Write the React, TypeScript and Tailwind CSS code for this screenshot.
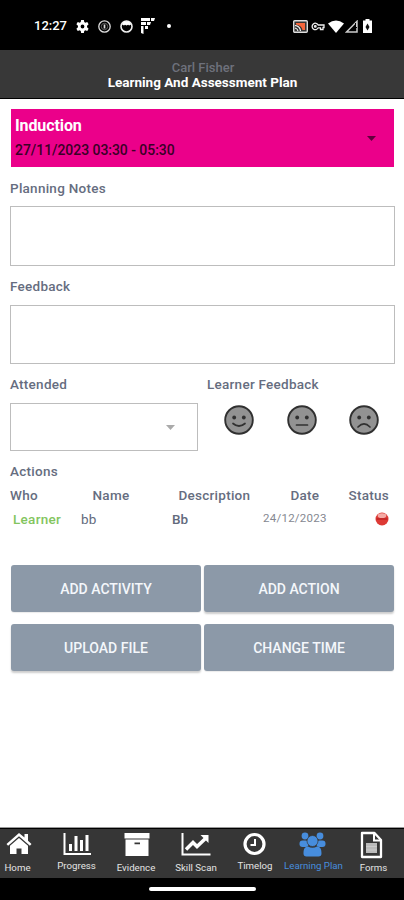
import React from "react";

function Label({ children }: { children: React.ReactNode }) {
  return <div className="h-[20px] text-[13.500px] leading-[20px] font-medium tracking-[0.260px] whitespace-nowrap text-[#666d80]">{children}</div>;
}

function StatusBar() {
  return (
    <div className="flex h-[50px] items-center bg-black pt-[2px] pl-[34px] text-white">
      <span className="w-[42px] text-[13px] leading-[18px] font-medium whitespace-nowrap">12:27</span>
      <svg className="w-[13px] h-[13px]" viewBox="0 0 24 24" fill="#fff">
        <path fillRule="evenodd" d="M9.5 0h5l.7 3.7 2 1.2 3.6-1.3 2.5 4.3-2.9 2.5v3.2l2.9 2.5-2.5 4.3-3.6-1.3-2 1.2-.7 3.7h-5l-.7-3.7-2-1.2-3.6 1.3-2.5-4.3 2.9-2.5v-3.2L.7 7.9l2.500-4.300 3.600 1.300 2-1.200zM12 8.500a3.500 3.500 0 1 0 0 7 3.500 3.500 0 0 0 0-7z" />
      </svg>
      <svg className="ml-[9px] w-[13px] h-[13px]" viewBox="0 0 13 13" fill="none" stroke="#ddd">
        <circle cx="6.500" cy="6.500" r="5.700" strokeWidth="1.300" />
        <circle cx="6.500" cy="6.500" r="3.200" strokeWidth=".8" stroke="#777" />
        <path d="M6.500 4.500v4" strokeWidth="1.700" />
      </svg>
      <svg className="ml-[9px] w-[13px] h-[13px]" viewBox="0 0 13 13">
        <circle cx="6.500" cy="6.500" r="5.500" fill="none" stroke="#eee" strokeWidth="1.600" />
        <path d="M2 4.500 4 5.600 5 4.700l1.500.9 1.600-.9 1 .9 2-1.100L9 1.200H4z" fill="#fff" />
      </svg>
      <svg className="ml-[8px] w-[15px] h-[16px]" viewBox="0 0 15 16" fill="#fff">
        <path d="M0 0h9v3H0zM10 0h4l-1 3h-3zM0 4h5v3H0zM6 4h4l-1 3H6zM0 8h2.500v8L0 15zM4 8h3v3H4z" />
      </svg>
      <span className="ml-[11px] h-[4px] w-[4px] rounded-full bg-white" />
      <div className="ml-auto flex items-center pr-[32px]">
        <svg className="w-[15px] h-[13px]" viewBox="0 0 15 13">
          <rect x=".7" y=".7" width="13.600" height="11.600" rx="1" fill="#333" stroke="#ddd" strokeWidth="1.400" />
          <path d="M3 3h9v7H9.500C9 7 6.500 5 3 4.500z" fill="#f4653b" />
          <path d="M2 5.500q5 .5 5.500 5.500M2 8q2.500.5 3 3" stroke="#fff" strokeWidth="1.100" fill="none" />
        </svg>
        <svg className="ml-[3px] w-[14px] h-[9px]" viewBox="0 0 14 9" fill="none" stroke="#eee" strokeWidth="1.300">
          <path d="M7.200 3H13v2.500h-1V7.500H9.500V5.800H7.200A3.200 3.200 0 1 1 7.200 3z" /><circle cx="4.300" cy="4.400" r=".8" />
        </svg>
        <svg className="ml-[3px] w-[16px] h-[13px]" viewBox="0 0 16 13"><path d="M0 3.500Q8-2.500 16 3.500L8 13z" fill="#fff" /></svg>
        <svg className="ml-[1px] w-[13px] h-[13px]" viewBox="0 0 13 13">
          <path d="M1.500 12H12V1.300z" fill="none" stroke="#ccc" strokeWidth="1.500" /><path d="M11 3v5" stroke="#000" strokeWidth="2" /><path d="M11.500 3v4" stroke="#ccc" />
        </svg>
        <svg className="ml-[5px] w-[9px] h-[14px]" viewBox="0 0 9 14">
          <path d="M2.500 0h4v1.500H9V14H0V1.500h2.500z" fill="#fff" /><path d="m4.500 4.500-2 3.500L4.500 11.500 6.500 8z" fill="#111" />
        </svg>
      </div>
    </div>
  );
}

function Face({ mouth }: { mouth: string }) {
  return (
    <svg className="h-[30px] w-[30px]" viewBox="0 0 30 30">
      <circle cx="15" cy="15" r="13.800" fill="#929292" stroke="#303030" strokeWidth="1.900" />
      <circle cx="10.200" cy="12.500" r="1.900" fill="#303030" />
      <circle cx="19.800" cy="12.500" r="1.900" fill="#303030" />
      <path d={mouth} fill="none" stroke="#303030" strokeWidth="1.700" strokeLinecap="round" />
    </svg>
  );
}

function Action({ children, raised = false }: { children: React.ReactNode; raised?: boolean }) {
  return (
    <button className={`h-[47px] flex-1 rounded-[3px] bg-[#8c99a8] pt-[1px] text-[14px] leading-[20px] font-medium whitespace-nowrap text-[#f4f7fb] ${raised ? "shadow-[0_2px_2px_rgba(0,0,0,0.2)]" : "shadow-[0_1px_1px_rgba(0,0,0,0.08)]"}`}>
      {children}
    </button>
  );
}

const tabs = [
  { name: "Home", width: "w-[47px]", drop: "pt-[3px]", icon: <g fill="#fff"><path d="M15 1 2.500 12l1.600 1.800L15 4.300l10.900 9.500 1.600-1.800-3.500-3.200V2h-3.500v3.600z" /><path d="M15 6 6 13.800V22h6.500v-5.500h5V22H24v-8.200z" /></g> },
  { name: "Progress", width: "w-[60px]", drop: "pt-[1px]", icon: <g fill="#fff"><path d="M.5 1h2v20h25.500v2H.5zM6 12h3v7H6zM11.500 4h3v15h-3zM17 8h3v11h-3zM22.500 3h3v16h-3z" /></g> },
  { name: "Evidence", width: "w-[59px]", drop: "pt-[3px]", icon: <g fill="#fff"><path d="M1.500 1h25v5.500h-25z" /><path fillRule="evenodd" d="M2.500 7.500h23V24h-23zM11.500 10.500v1.800h5.500v-1.800z" /></g> },
  { name: "Skill Scan", width: "w-[61px]", drop: "pt-[3px]", icon: <g><path d="M-.5 1v21.500h28" fill="none" stroke="#fff" strokeWidth="2" /><path d="m3 17.500 7-7 4 4L23 6" fill="none" stroke="#fff" strokeWidth="3.500" /><path d="M17.500 3h8v8z" fill="#fff" /></g> },
  { name: "Timelog", width: "w-[57px]", drop: "pt-[1px]", icon: <g fill="none" stroke="#fff"><circle cx="12.500" cy="12" r="9.500" strokeWidth="3.200" /><path d="M13 7v6H8.500" strokeWidth="2" /></g> },
  { name: "Learning Plan", width: "w-[60px]", drop: "pt-[1px]", icon: <g fill="#478ddd"><circle cx="5" cy="4" r="3.400" /><circle cx="20" cy="4" r="3.400" /><rect x="-.5" y="8.500" width="9" height="6.500" rx="3" /><rect x="16.500" y="8.500" width="9" height="6.500" rx="3" /><circle cx="12.500" cy="9" r="5.500" stroke="#363636" strokeWidth=".7" /><path d="M3.500 21.500c0-5 1.500-7 4.500-7q4.500 2.500 9 0c3 0 4.500 2 4.500 7 0 2-1 3-3 3h-12c-2 0-3-1-3-3z" /></g> },
  { name: "Forms", width: "w-[60px]", drop: "pt-[3px]", icon: <g><path d="M2 1h12.500L21 8v17H2z" fill="none" stroke="#fff" strokeWidth="2.300" strokeLinejoin="round" /><path d="M14 1v7.500h7" fill="none" stroke="#fff" strokeWidth="2" /><path d="M6 11h11v10H6z" fill="#bbb" /><path d="M6 14.500h11M6 18h11" stroke="#ccc" /></g> },
];

export default function App() {
  return (
    <div className="flex h-[900px] w-[404px] flex-col overflow-hidden bg-white font-['Roboto','Liberation_Sans',sans-serif]">
      <StatusBar />
      <header className="flex h-[49px] flex-col items-center border-b border-black bg-[#383838] pt-[11px] whitespace-nowrap">
        <div className="pl-[2px] text-[13px] leading-[14px] font-medium text-[#6e717c]">Carl Fisher</div>
        <h1 className="pl-px text-[13.500px] leading-[15px] font-bold text-white">Learning And Assessment Plan</h1>
      </header>
      <main className="flex flex-1 flex-col pt-[10px] pr-[9px] pl-[10px]">
        <section className="mr-px ml-px flex h-[58px] items-center justify-between bg-[#eb008a] pr-[18px] pl-[4px]">
          <div>
            <div className="text-[16px] leading-[24px] font-bold tracking-[-0.100px] text-white">Induction</div>
            <div className="text-[14px] leading-[25px] font-medium tracking-[-0.050px] whitespace-nowrap text-[#390026]">27/11/2023 03:30 - 05:30</div>
          </div>
          <svg className="h-[5px] w-[9px]" viewBox="0 0 9 5"><path d="M0 0h9L4.500 5z" fill="#61003c" /></svg>
        </section>
        <div className="pt-[11px]"><Label>Planning Notes</Label></div>
        <div className="mt-[8px] h-[60px] border border-[#bdbdbd]" />
        <div className="pt-[10px]"><Label>Feedback</Label></div>
        <div className="mt-[9px] h-[59px] border border-[#bdbdbd]" />
        <div className="flex h-[87px] pt-[10px]">
          <div className="w-[197px]">
            <Label>Attended</Label>
            <div className="mt-[9px] flex h-[48px] w-[188px] items-center justify-end border border-[#bdbdbd] pr-[22px]">
              <svg className="h-[5px] w-[9px]" viewBox="0 0 9 5"><path d="M0 0h9L4.500 5z" fill="#aaa" /></svg>
            </div>
          </div>
          <div className="flex-1">
            <Label>Learner Feedback</Label>
            <div className="flex gap-[32.500px] pt-[11px] pl-[17px]">
              <Face mouth="M9 18.500q6 5 12 0" />
              <Face mouth="M9.500 20h11" />
              <Face mouth="M9 22q6-6 12 0" />
            </div>
          </div>
        </div>
        <div className="pt-[10px]"><Label>Actions</Label></div>
        <div className="mt-[2px] grid h-[24px] grid-cols-[82.500px_86px_112px_58px_1fr] items-center">
          <Label>Who</Label><Label>Name</Label><Label>Description</Label><Label>Date</Label><Label>Status</Label>
        </div>
        <div className="grid h-[24px] grid-cols-[68px_91px_91px_112px_1fr] items-center pl-[3px] text-[13.500px] whitespace-nowrap text-[#626a7c]">
          <span className="font-medium tracking-[0.300px] text-[#83c55e]">Learner</span>
          <span className="tracking-[0.100px]">bb</span>
          <span className="font-medium">Bb</span>
          <span className="text-[11.500px] tracking-[0.250px] text-[#858891]">24/12/2023</span>
          <svg className="h-[15px] w-[15px]" viewBox="0 0 15 15">
            <circle cx="7" cy="7" r="6.500" fill="#dd3a35" /><ellipse cx="7" cy="3.700" rx="4.300" ry="2.400" fill="#f4aaa5" /><path d="M1.500 7h11" stroke="#b81e20" strokeWidth="1.200" />
          </svg>
        </div>
        <div className="mt-[34px] flex gap-[3px] pr-px pl-px"><Action>ADD ACTIVITY</Action><Action raised>ADD ACTION</Action></div>
        <div className="mt-[12px] flex gap-[3px] pr-px pl-px"><Action raised>UPLOAD FILE</Action><Action>CHANGE TIME</Action></div>
      </main>
      <nav className="flex h-[50px] border-t border-black bg-[#363636] pr-px shadow-[0_-1px_0_#999]">
        {tabs.map((tab) => (
          <div key={tab.name} className={`flex shrink-0 flex-col items-center pt-[3px] ${tab.width} ${tab.name === "Home" ? "pr-[11px]" : ""}`}>
            <svg className="h-[27px] w-[28px] overflow-visible" viewBox="0 0 28 27">{tab.icon}</svg>
            <span className={`pr-px text-[9.700px] leading-[12px] whitespace-nowrap ${tab.drop} ${tab.name === "Learning Plan" ? "text-[#478ddd]" : "text-[#e4e4e4]"}`}>{tab.name}</span>
          </div>
        ))}
      </nav>
      <div className="flex h-[22px] justify-center bg-black pt-[9px]"><div className="h-[4px] w-[107px] rounded-full bg-white" /></div>
    </div>
  );
}
